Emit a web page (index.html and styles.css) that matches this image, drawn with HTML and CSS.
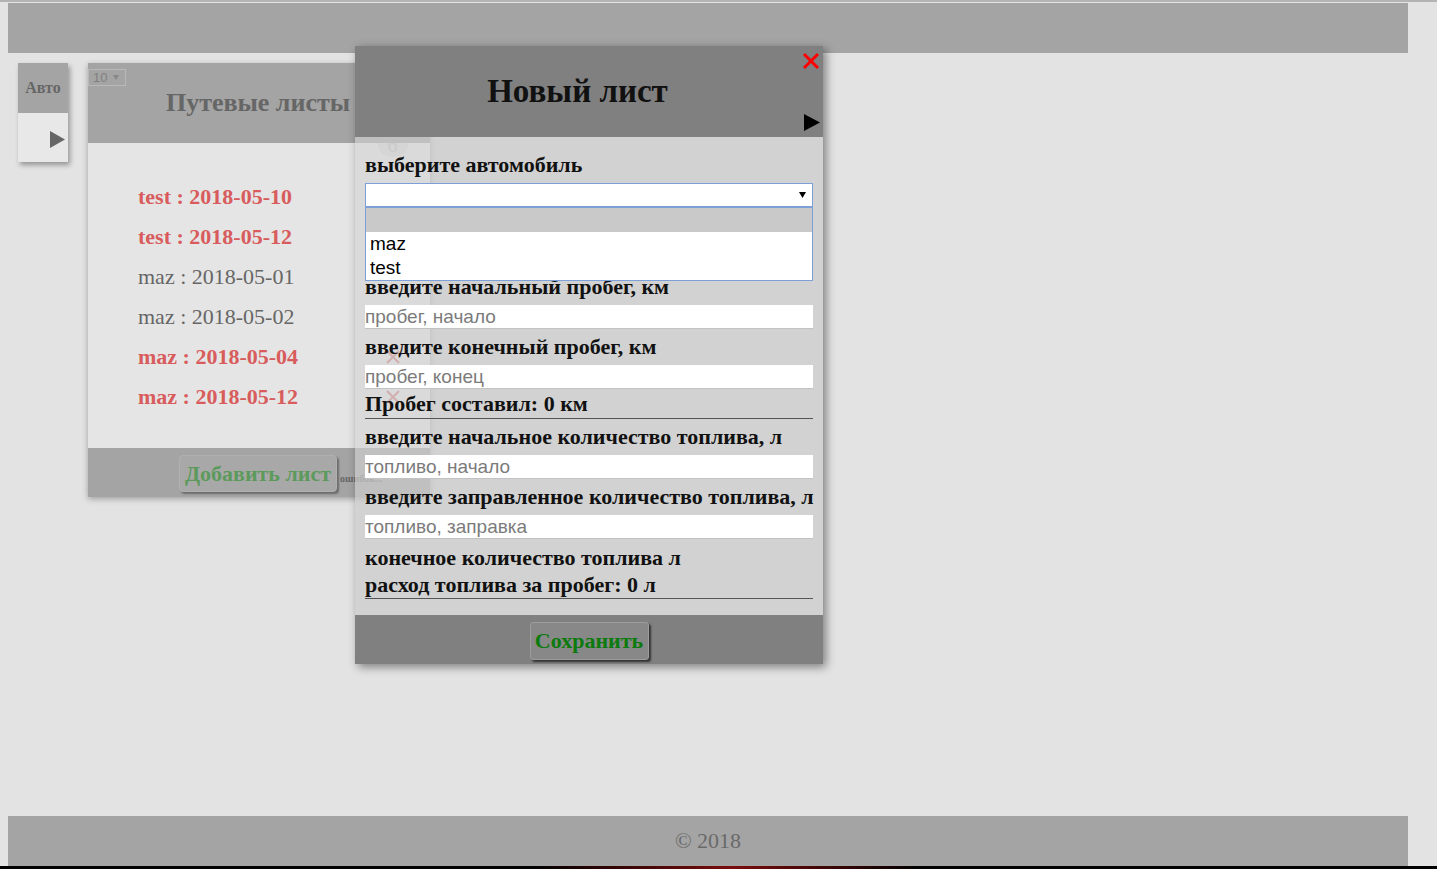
FILE: index.html
```html
<!DOCTYPE html>
<html lang="ru">
<head>
<meta charset="utf-8">
<title>Путевые листы</title>
<link rel="stylesheet" href="styles.css">
</head>
<body>
<div class="page">
  <div class="topline"></div>
  <header class="topbar"></header>
  <main class="content">
    <aside class="auto-panel">
      <div class="auto-head">Авто</div>
      <div class="auto-body">
        <svg width="15" height="17" viewBox="0 0 15 17"><polygon points="0,0 15,8.5 0,17" fill="#666"/></svg>
      </div>
    </aside>
    <section class="sheets">
      <div class="sheets-head">
        <div class="per-page">10 <svg width="6" height="5" viewBox="0 0 6 5"><polygon points="0,0 6,0 3,5" fill="#888"/></svg></div>
        <h2>Путевые листы</h2>
      </div>
      <div class="sheets-body">
        <ul class="sheet-list">
          <li class="bad">test : 2018-05-10</li>
          <li class="bad">test : 2018-05-12</li>
          <li>maz : 2018-05-01</li>
          <li>maz : 2018-05-02</li>
          <li class="bad">maz : 2018-05-04</li>
          <li class="bad">maz : 2018-05-12</li>
        </ul>
        <div class="side-col">
          <span class="badge">6</span>
          <span class="del"><svg width="16" height="16" viewBox="0 0 16 16"><path d="M2 2L14 14M14 2L2 14" stroke="#e06a6a" stroke-width="2"/></svg></span>
          <span class="del"><svg width="16" height="16" viewBox="0 0 16 16"><path d="M2 2L14 14M14 2L2 14" stroke="#e06a6a" stroke-width="2"/></svg></span>
          <span class="del"></span>
          <span class="del"></span>
          <span class="del"><svg width="16" height="16" viewBox="0 0 16 16"><path d="M2 2L14 14M14 2L2 14" stroke="#e06a6a" stroke-width="2"/></svg></span>
          <span class="del"><svg width="16" height="16" viewBox="0 0 16 16"><path d="M2 2L14 14M14 2L2 14" stroke="#e06a6a" stroke-width="2"/></svg></span>
        </div>
      </div>
      <div class="sheets-foot">
        <button class="add-btn">Добавить лист</button>
        <span class="errors">ошибок...</span>
      </div>
    </section>
  </main>
  <footer class="footer">© 2018</footer>
  <div class="taskbar"></div>

  <div class="modal">
    <div class="modal-head">
      <h1>Новый лист</h1>
      <svg class="close" width="18" height="18" viewBox="0 0 18 18"><path d="M2 2L16 16M16 2L2 16" stroke="#ff0000" stroke-width="3"/></svg>
      <svg class="next" width="16" height="17" viewBox="0 0 16 17"><polygon points="0,0 16,8.5 0,17" fill="#000"/></svg>
    </div>
    <div class="modal-body">
      <label class="field-label">выберите автомобиль</label>
      <div class="car-select">
        <div class="select-box">
          <svg width="7" height="6" viewBox="0 0 7 6"><polygon points="0,0 7,0 3.5,6" fill="#000"/></svg>
        </div>
        <ul class="options">
          <li class="hl"></li>
          <li>maz</li>
          <li>test</li>
        </ul>
      </div>
      <label class="field-label">введите начальный пробег, км</label>
      <input class="text-input" type="text" placeholder="пробег, начало">
      <label class="field-label">введите конечный пробег, км</label>
      <input class="text-input" type="text" placeholder="пробег, конец">
      <div class="summary">Пробег составил: 0 км</div>
      <label class="field-label">введите начальное количество топлива, л</label>
      <input class="text-input" type="text" placeholder="топливо, начало">
      <label class="field-label">введите заправленное количество топлива, л</label>
      <input class="text-input" type="text" placeholder="топливо, заправка">
      <div class="result">конечное количество топлива л</div>
      <div class="result last">расход топлива за пробег: 0 л</div>
    </div>
    <div class="modal-foot">
      <button class="save-btn">Сохранить</button>
    </div>
  </div>
</div>
</body>
</html>
```

FILE: styles.css
```css
* { box-sizing: border-box; }

html, body {
  margin: 0;
  padding: 0;
}

body {
  background: #e3e3e3;
  font-family: "Liberation Serif", "Times New Roman", serif;
  overflow: hidden;
}

.page {
  position: relative;
  width: 1437px;
  height: 869px;
  display: flex;
  flex-direction: column;
}

.topline {
  flex: none;
  height: 2px;
  margin-bottom: 1px;
  background: #b3b3b3;
}

.topbar {
  flex: none;
  width: 1400px;
  height: 50px;
  margin: 0 8px;
  background: #a4a4a4;
}

.content {
  flex: 1;
  width: 1400px;
  margin: 0 8px;
  padding: 10px 0 0 10px;
  display: flex;
  align-items: flex-start;
  gap: 20px;
}

.footer {
  flex: none;
  width: 1400px;
  height: 50px;
  margin: 0 8px;
  background: #a4a4a4;
  color: #6a6a6a;
  font-size: 22px;
  display: flex;
  align-items: center;
  justify-content: center;
}

.taskbar {
  flex: none;
  height: 3px;
  background: linear-gradient(90deg, #000 0%, #000 37%, #7a0c0c 51%, #000 64%, #000 100%);
}

/* Авто panel */
.auto-panel {
  flex: none;
  width: 50px;
  box-shadow: 2px 3px 5px rgba(0, 0, 0, 0.35);
}

.auto-head {
  height: 50px;
  background: #a4a4a4;
  color: #666;
  font-weight: bold;
  font-size: 16px;
  display: flex;
  align-items: center;
  justify-content: center;
}

.auto-body {
  height: 49px;
  background: #e8e8e8;
  display: flex;
  align-items: center;
  justify-content: flex-end;
  padding: 3px 3px 0 0;
}

.auto-body svg { display: block; }

/* sheets panel */
.sheets {
  flex: none;
  width: 342px;
  box-shadow: 0 2px 6px rgba(0, 0, 0, 0.3);
}

.sheets-head {
  position: relative;
  height: 80px;
  background: #a4a4a4;
  display: flex;
  align-items: center;
  justify-content: center;
}

.sheets-head h2 {
  margin: 0 0 0 -2px;
  font-size: 26px;
  font-weight: bold;
  color: #666;
}

.per-page {
  position: absolute;
  left: 0;
  top: 6px;
  width: 38px;
  height: 17px;
  border: 1px solid #b9b9b9;
  padding-left: 4px;
  font: 13px/15px "Liberation Sans", Arial, sans-serif;
  color: #808080;
  display: flex;
  align-items: center;
  gap: 6px;
}

.sheets-body {
  height: 305px;
  display: flex;
  background: #e5e5e5;
}

.sheet-list {
  flex: 1;
  list-style: none;
  margin: 0;
  padding: 34px 0 0 50px;
}

.sheet-list li {
  font-size: 22px;
  line-height: 40px;
  color: #666;
}

.sheet-list li.bad {
  color: #d85c5c;
  font-weight: bold;
}

.side-col {
  width: 75px;
  background: #fff;
  display: flex;
  flex-direction: column;
  align-items: center;
}

.badge {
  width: 30px;
  height: 24px;
  margin-top: -10px;
  margin-bottom: 20px;
  border-radius: 50%;
  background: #ececec;
  color: #c8c8c8;
  font-size: 20px;
  line-height: 24px;
  text-align: center;
}

.del {
  height: 40px;
  display: flex;
  align-items: center;
}

.sheets-foot {
  height: 49px;
  background: #a4a4a4;
  display: grid;
  grid-template-columns: 1fr auto 1fr;
  align-items: start;
  padding-top: 7px;
}

.add-btn {
  grid-column: 2;
  width: 158px;
  height: 37px;
  padding: 0;
  margin-left: -2px;
  border: 1px solid #b0b0b0;
  border-radius: 4px;
  background: #a8a8a8;
  box-shadow: 2px 2px 2px rgba(0, 0, 0, 0.35);
  font-family: "Liberation Serif", "Times New Roman", serif;
  font-size: 22px;
  font-weight: bold;
  color: #5c9a5c;
}

.errors {
  grid-column: 3;
  margin: 18px 0 0 3px;
  font-size: 10px;
  font-weight: bold;
  color: #666;
  white-space: nowrap;
}

/* modal */
.modal {
  position: absolute;
  left: 355px;
  top: 46px;
  width: 468px;
  box-shadow: 3px 3px 9px rgba(0, 0, 0, 0.45);
  z-index: 5;
}

.modal-head {
  position: relative;
  height: 91px;
  background: #808080;
  display: flex;
  align-items: center;
  justify-content: center;
  padding-right: 23px;
}

.modal-head h1 {
  margin: 0;
  font-size: 33px;
  font-weight: bold;
  color: #111;
}

.close {
  position: absolute;
  right: 3px;
  top: 6px;
}

.next {
  position: absolute;
  right: 3px;
  top: 68px;
}

.modal-body {
  background: rgba(203, 203, 203, 0.71);
  padding: 10px 10px 16px;
}

.field-label {
  display: block;
  font-size: 22px;
  font-weight: bold;
  line-height: 36px;
  color: #111;
  white-space: nowrap;
}

.text-input {
  display: block;
  width: 100%;
  height: 24px;
  margin: 0;
  padding: 0;
  border: none;
  border-bottom: 1px solid #c2c2c2;
  background: #fff;
  font: 19px "Liberation Sans", Arial, sans-serif;
  color: #000;
}

.text-input::placeholder { color: #7b7b7b; }

.car-select {
  position: relative;
  height: 24px;
  margin-bottom: 62px;
}

.select-box {
  height: 24px;
  border: 1px solid #7ea0d8;
  background: #fff;
  display: flex;
  align-items: center;
  justify-content: flex-end;
  padding-right: 6px;
}

.select-box svg { display: block; }

.options {
  position: absolute;
  left: 0;
  right: 0;
  top: 24px;
  margin: 0;
  padding: 0;
  list-style: none;
  border: 1px solid #7ea0d8;
  background: #fff;
  font: 19px "Liberation Sans", Arial, sans-serif;
  color: #000;
  z-index: 2;
}

.options li {
  height: 24px;
  line-height: 24px;
  padding-left: 4px;
}

.options li.hl { background: #c9c9c9; }

.summary {
  margin-top: 1px;
  font-size: 22px;
  font-weight: bold;
  line-height: 28px;
  color: #111;
  border-bottom: 1px solid #555;
}

.result {
  margin-top: 5px;
  font-size: 22px;
  font-weight: bold;
  line-height: 27px;
  color: #111;
}

.result.last {
  margin-top: 0;
  border-bottom: 1px solid #555;
}

.modal-foot {
  height: 49px;
  background: #808080;
  display: flex;
  justify-content: center;
  align-items: flex-start;
  padding-top: 7px;
}

.save-btn {
  width: 119px;
  height: 38px;
  padding: 0;
  border: 1px solid #9c9c9c;
  border-radius: 3px;
  background: #888;
  box-shadow: 2px 2px 2px rgba(0, 0, 0, 0.6);
  font-family: "Liberation Serif", "Times New Roman", serif;
  font-size: 22px;
  font-weight: bold;
  color: #0c7a0c;
}
```
